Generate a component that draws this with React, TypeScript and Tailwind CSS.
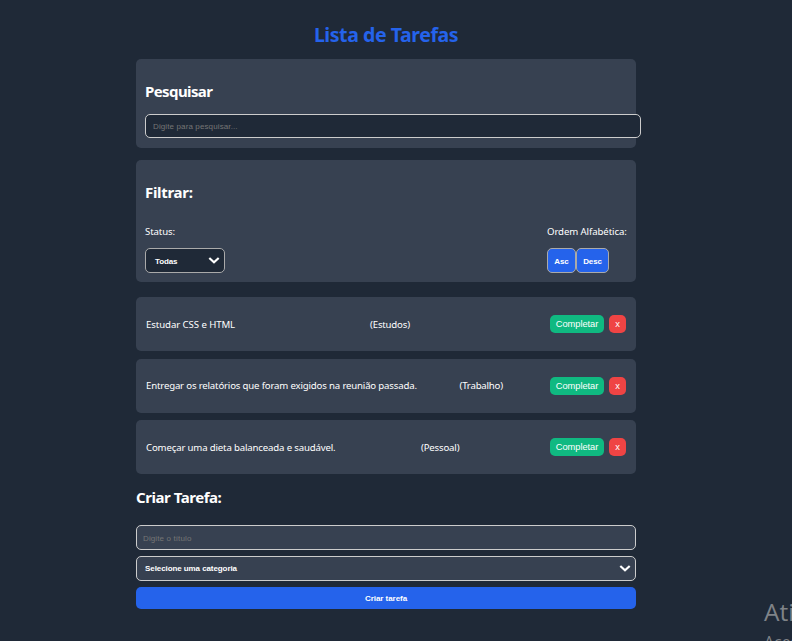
import type { ReactNode } from "react";

type Task = { text: string; textClass: string; category: string; categoryClass: string };

const tasks: Task[] = [
  { text: "Estudar CSS e HTML", textClass: "w-[224px] tracking-[-0.08px]", category: "(Estudos)", categoryClass: "tracking-[-0.18px]" },
  { text: "Entregar os relatórios que foram exigidos na reunião passada.", textClass: "w-[313.5px] tracking-[-0.17px]", category: "(Trabalho)", categoryClass: "tracking-[-0.2px]" },
  { text: "Começar uma dieta balanceada e saudável.", textClass: "w-[275px] tracking-[-0.16px]", category: "(Pessoal)", categoryClass: "tracking-[-0.18px]" },
];

function Chevron() {
  return (
    <svg width="12" height="8" viewBox="0 0 12 8" fill="none" stroke="#fff" strokeWidth="2.2">
      <path d="M1.3 1 6 5.2 10.7 1" />
    </svg>
  );
}

function Heading({ children, className }: { children: ReactNode; className: string }) {
  return <h2 className={`h-5 text-[15px] leading-5 font-bold whitespace-nowrap text-white ${className}`}>{children}</h2>;
}

function TaskRow({ task }: { task: Task }) {
  return (
    <li className="flex h-[54px] items-center rounded-[5px] bg-[#374151] px-[10px] text-[9.65px] whitespace-nowrap text-white">
      <span className={`mt-[2px] ${task.textClass}`}>{task.text}</span>
      <span className={`mt-[2px] ${task.categoryClass}`}>{task.category}</span>
      <div className="ml-auto flex gap-[5px] font-['Liberation_Sans',Arial,sans-serif]">
        <button className="h-[18px] w-[54px] rounded-[5px] bg-[#10b981] text-[9.3px] leading-[18px] tracking-[-0.05px]">Completar</button>
        <button className="h-[18px] w-[17px] rounded-[5px] bg-[#ef4444] text-[9.3px] leading-[18px]">x</button>
      </div>
    </li>
  );
}

export default function App() {
  return (
    <main className="relative h-[641px] w-[792px] overflow-hidden bg-[#1f2937] pl-[136px] font-['Noto_Sans','Open_Sans',sans-serif]">
      <div className="w-[500px] pt-[21px]">
        <h1 className="h-7 text-center text-[19.5px] leading-7 font-bold tracking-[-0.43px] whitespace-nowrap text-[#2563eb]">Lista de Tarefas</h1>

        <section className="mt-[10px] h-[89px] rounded-[5px] bg-[#374151] pt-[22px] pl-[9px]">
          <Heading className="tracking-[-0.6px]">Pesquisar</Heading>
          <input
            className="mt-[13px] block h-6 w-[496px] rounded-[5px] border border-[#ccc] bg-[#1f2937] px-[7px] font-['Liberation_Sans',Arial,sans-serif] text-[8px] tracking-[0.12px] text-white placeholder:text-[#757575]"
            placeholder="Digite para pesquisar..."
          />
        </section>

        <section className="mt-3 h-[122px] rounded-[5px] bg-[#374151] px-[9px] pt-[22px]">
          <Heading className="tracking-[-0.3px]">Filtrar:</Heading>
          <div className="mt-[23px] flex justify-between text-[9.65px] leading-[14px] whitespace-nowrap text-white">
            <div>
              <p className="tracking-[-0.12px]">Status:</p>
              <button className="mt-[9px] flex h-[25px] w-20 items-center justify-between rounded-[5px] border border-[#aaa] bg-[#1f2937] pr-1 pl-[9px] font-['Liberation_Sans',Arial,sans-serif] text-[8px] font-bold tracking-[-0.1px]">
                <span className="mt-[2px]">Todas</span>
                <Chevron />
              </button>
            </div>
            <div className="w-20">
              <p className="tracking-[-0.1px]">Ordem Alfabética:</p>
              <div className="mt-[9px] flex font-['Liberation_Sans',Arial,sans-serif] text-[8px] font-bold tracking-[-0.1px]">
                <button className="h-[25px] w-[29px] rounded-[5px] border border-[#aaa] bg-[#2563eb] pt-[2px]">Asc</button>
                <button className="h-[25px] w-[33px] rounded-[5px] border border-[#aaa] bg-[#2563eb] pt-[2px]">Desc</button>
              </div>
            </div>
          </div>
        </section>

        <ul className="mt-[15px] flex h-[177px] flex-col justify-between">
          {tasks.map((task) => (
            <TaskRow key={task.text} task={task} />
          ))}
        </ul>

        <Heading className="mt-[13px] tracking-[-0.45px]">Criar Tarefa:</Heading>
        <form className="mt-[18px] flex flex-col gap-[6px] font-['Liberation_Sans',Arial,sans-serif] text-[8px]">
          <input className="h-[25px] rounded-[5px] border border-[#ccc] bg-[#374151] px-[6px] pt-px tracking-[0.12px] text-white placeholder:text-[#757575]" placeholder="Digite o título" />
          <button type="button" className="flex h-[25px] items-center justify-between rounded-[5px] border border-[#ccc] bg-[#374151] pr-[4px] pl-[8px] font-bold tracking-[-0.08px] text-white">
            Selecione uma categoria
            <Chevron />
          </button>
          <button type="button" className="h-[22px] rounded-[5px] bg-[#2563eb] pt-px font-bold tracking-[-0.05px] text-white">
            Criar tarefa
          </button>
        </form>
      </div>

      <aside className="absolute top-[594px] left-[764px] font-['Open_Sans',sans-serif] whitespace-nowrap text-[#7f8388]">
        <p className="text-[24.5px] leading-9">Ativ</p>
        <p className="mt-[2px] text-[16px] leading-5">Aces</p>
      </aside>
    </main>
  );
}
